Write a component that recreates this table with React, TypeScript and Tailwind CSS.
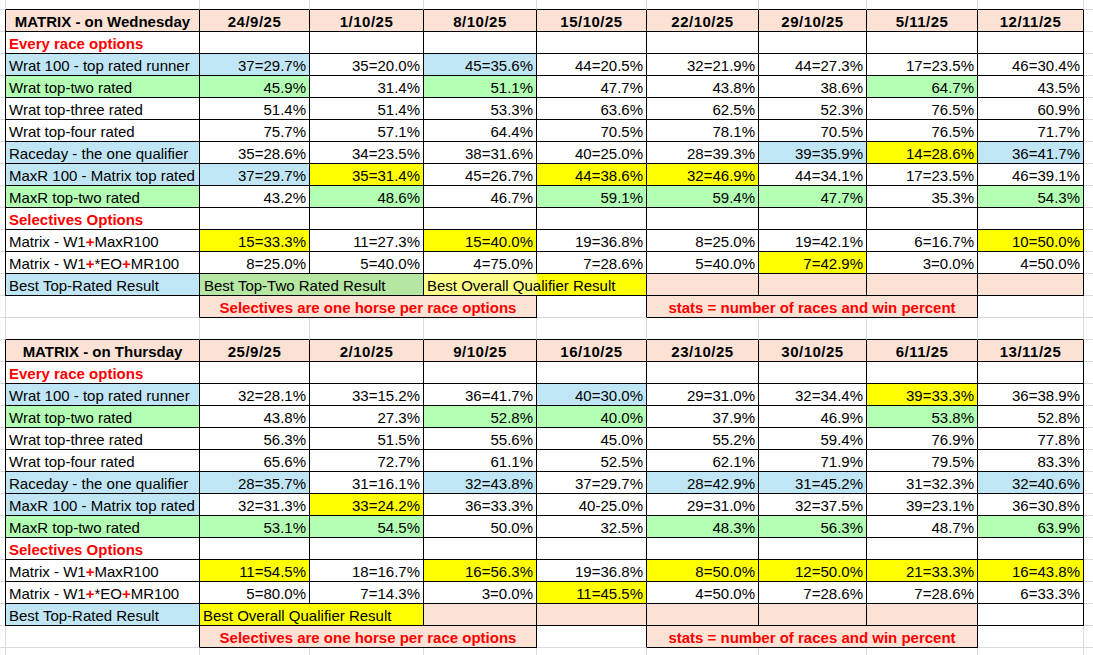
import type { ReactNode } from 'react'

type Bg = '' | 'b' | 'g' | 'y'

const BG: Record<Bg, string> = {
  '': 'bg-white',
  b: 'bg-[#c0e6f5]',
  g: 'bg-[#b3ffb3]',
  y: 'bg-[#ffff00]',
}

const GRID = 'grid grid-cols-[5px_195px_110px_114px_113px_110px_112px_108px_111px_106px_1fr]'
const ROW = `${GRID} h-[22px]`
const CELL = 'box-border border-r border-b overflow-hidden whitespace-nowrap leading-[23px] text-[15px]'
const BLK = 'border-r-black border-b-black'
const GREY = 'border-r-[#dadada] border-b-[#dadada]'
const GUT = 'box-border border-b border-b-[#dadada]'
const PEACH = 'bg-[#fbe2d5]'

type Row =
  | { section: string }
  | { label: ReactNode; lbg: Bg; cells: [string, Bg][] }

const Plus = () => <span className="font-bold text-[#ff0000]">+</span>

const W1MAX = (
  <>
    Matrix - W1<Plus />MaxR100
  </>
)
const W1EO = (
  <>
    Matrix - W1<Plus />*EO<Plus />MR100
  </>
)

const wednesday: Row[] = [
  { section: 'Every race options' },
  {
    label: 'Wrat 100 - top rated runner',
    lbg: 'b',
    cells: [['37=29.7%', 'b'], ['35=20.0%', ''], ['45=35.6%', 'b'], ['44=20.5%', ''], ['32=21.9%', ''], ['44=27.3%', ''], ['17=23.5%', ''], ['46=30.4%', '']],
  },
  {
    label: 'Wrat top-two rated',
    lbg: 'g',
    cells: [['45.9%', 'g'], ['31.4%', ''], ['51.1%', 'g'], ['47.7%', ''], ['43.8%', ''], ['38.6%', ''], ['64.7%', 'g'], ['43.5%', '']],
  },
  {
    label: 'Wrat top-three rated',
    lbg: '',
    cells: [['51.4%', ''], ['51.4%', ''], ['53.3%', ''], ['63.6%', ''], ['62.5%', ''], ['52.3%', ''], ['76.5%', ''], ['60.9%', '']],
  },
  {
    label: 'Wrat top-four rated',
    lbg: '',
    cells: [['75.7%', ''], ['57.1%', ''], ['64.4%', ''], ['70.5%', ''], ['78.1%', ''], ['70.5%', ''], ['76.5%', ''], ['71.7%', '']],
  },
  {
    label: 'Raceday - the one qualifier',
    lbg: 'b',
    cells: [['35=28.6%', ''], ['34=23.5%', ''], ['38=31.6%', ''], ['40=25.0%', ''], ['28=39.3%', ''], ['39=35.9%', 'b'], ['14=28.6%', 'y'], ['36=41.7%', 'b']],
  },
  {
    label: 'MaxR 100 - Matrix top rated',
    lbg: 'b',
    cells: [['37=29.7%', 'b'], ['35=31.4%', 'y'], ['45=26.7%', ''], ['44=38.6%', 'y'], ['32=46.9%', 'y'], ['44=34.1%', ''], ['17=23.5%', ''], ['46=39.1%', '']],
  },
  {
    label: 'MaxR top-two rated',
    lbg: 'g',
    cells: [['43.2%', ''], ['48.6%', 'g'], ['46.7%', ''], ['59.1%', 'g'], ['59.4%', 'g'], ['47.7%', 'g'], ['35.3%', ''], ['54.3%', 'g']],
  },
  { section: 'Selectives Options' },
  {
    label: W1MAX,
    lbg: '',
    cells: [['15=33.3%', 'y'], ['11=27.3%', ''], ['15=40.0%', 'y'], ['19=36.8%', ''], ['8=25.0%', ''], ['19=42.1%', ''], ['6=16.7%', ''], ['10=50.0%', 'y']],
  },
  {
    label: W1EO,
    lbg: '',
    cells: [['8=25.0%', ''], ['5=40.0%', ''], ['4=75.0%', ''], ['7=28.6%', ''], ['5=40.0%', ''], ['7=42.9%', 'y'], ['3=0.0%', ''], ['4=50.0%', '']],
  },
]

const thursday: Row[] = [
  { section: 'Every race options' },
  {
    label: 'Wrat 100 - top rated runner',
    lbg: 'b',
    cells: [['32=28.1%', ''], ['33=15.2%', ''], ['36=41.7%', ''], ['40=30.0%', 'b'], ['29=31.0%', ''], ['32=34.4%', ''], ['39=33.3%', 'y'], ['36=38.9%', '']],
  },
  {
    label: 'Wrat top-two rated',
    lbg: 'g',
    cells: [['43.8%', ''], ['27.3%', ''], ['52.8%', 'g'], ['40.0%', 'g'], ['37.9%', ''], ['46.9%', ''], ['53.8%', 'g'], ['52.8%', '']],
  },
  {
    label: 'Wrat top-three rated',
    lbg: '',
    cells: [['56.3%', ''], ['51.5%', ''], ['55.6%', ''], ['45.0%', ''], ['55.2%', ''], ['59.4%', ''], ['76.9%', ''], ['77.8%', '']],
  },
  {
    label: 'Wrat top-four rated',
    lbg: '',
    cells: [['65.6%', ''], ['72.7%', ''], ['61.1%', ''], ['52.5%', ''], ['62.1%', ''], ['71.9%', ''], ['79.5%', ''], ['83.3%', '']],
  },
  {
    label: 'Raceday - the one qualifier',
    lbg: 'b',
    cells: [['28=35.7%', 'b'], ['31=16.1%', ''], ['32=43.8%', 'b'], ['37=29.7%', ''], ['28=42.9%', 'b'], ['31=45.2%', 'b'], ['31=32.3%', ''], ['32=40.6%', 'b']],
  },
  {
    label: 'MaxR 100 - Matrix top rated',
    lbg: 'b',
    cells: [['32=31.3%', ''], ['33=24.2%', 'y'], ['36=33.3%', ''], ['40-25.0%', ''], ['29=31.0%', ''], ['32=37.5%', ''], ['39=23.1%', ''], ['36=30.8%', '']],
  },
  {
    label: 'MaxR top-two rated',
    lbg: 'g',
    cells: [['53.1%', 'g'], ['54.5%', 'g'], ['50.0%', ''], ['32.5%', ''], ['48.3%', 'g'], ['56.3%', 'g'], ['48.7%', ''], ['63.9%', 'g']],
  },
  { section: 'Selectives Options' },
  {
    label: W1MAX,
    lbg: '',
    cells: [['11=54.5%', 'y'], ['18=16.7%', ''], ['16=56.3%', 'y'], ['19=36.8%', ''], ['8=50.0%', 'y'], ['12=50.0%', 'y'], ['21=33.3%', 'y'], ['16=43.8%', 'y']],
  },
  {
    label: W1EO,
    lbg: '',
    cells: [['5=80.0%', ''], ['7=14.3%', ''], ['3=0.0%', ''], ['11=45.5%', 'y'], ['4=50.0%', ''], ['7=28.6%', ''], ['7=28.6%', ''], ['6=33.3%', '']],
  },
]

// empty row of plain gridlines; `edge` puts a black line under the table columns
function BlankRow({ tall = true, edge = false }: { tall?: boolean; edge?: boolean }) {
  return (
    <div className={`${GRID} ${tall ? 'h-[22px]' : 'h-[10px]'}`}>
      <div className={GUT} />
      {Array.from({ length: 9 }).map((_, i) => (
        <div
          key={i}
          className={`box-border border-r border-b border-r-[#dadada] ${edge ? 'border-b-black' : 'border-b-[#dadada]'} ${i === 0 ? 'border-l border-l-[#dadada]' : ''}`}
        />
      ))}
      <div className={GUT} />
    </div>
  )
}

function HeaderRow({ title, dates }: { title: string; dates: string[] }) {
  return (
    <div className={ROW}>
      <div className={GUT} />
      <div className={`${CELL} ${BLK} ${PEACH} border-l border-l-black text-center font-bold text-[14px]`}>{title}</div>
      {dates.map((d) => (
        <div key={d} className={`${CELL} ${BLK} ${PEACH} text-center font-bold tracking-[0.5px]`}>
          {d}
        </div>
      ))}
      <div className={GUT} />
    </div>
  )
}

function BodyRow({ row }: { row: Row }) {
  if ('section' in row) {
    return (
      <div className={ROW}>
        <div className={GUT} />
        <div className={`${CELL} ${BLK} border-l border-l-black pl-[3px] font-bold text-[14.5px] text-[#ff0000]`}>
          {row.section}
        </div>
        {Array.from({ length: 8 }).map((_, i) => (
          <div key={i} className={`${CELL} ${BLK} bg-white`} />
        ))}
        <div className={GUT} />
      </div>
    )
  }
  return (
    <div className={ROW}>
      <div className={GUT} />
      <div className={`${CELL} ${BLK} border-l border-l-black pl-[3px] ${BG[row.lbg]}`}>{row.label}</div>
      {row.cells.map(([v, bg], i) => (
        <div key={i} className={`${CELL} ${BLK} pr-[3px] text-right ${BG[bg]}`}>
          {v}
        </div>
      ))}
      <div className={GUT} />
    </div>
  )
}

function LegendWed() {
  return (
    <div className={ROW}>
      <div className={GUT} />
      <div className={`${CELL} ${BLK} border-l border-l-black pl-[3px] ${BG.b}`}>Best Top-Rated Result</div>
      <div className={`${CELL} ${BLK} col-span-2 pl-[4px] bg-[#b5e6a2]`}>Best Top-Two Rated Result</div>
      <div className={`${CELL} ${BLK} col-span-2 pl-[3px] bg-[linear-gradient(to_right,#ffff88_113px,#ffff00_113px)]`}>
        Best Overall Qualifier Result
      </div>
      {Array.from({ length: 4 }).map((_, i) => (
        <div key={i} className={`${CELL} ${BLK} ${PEACH}`} />
      ))}
      <div className={GUT} />
    </div>
  )
}

function LegendThu() {
  return (
    <div className={ROW}>
      <div className={GUT} />
      <div className={`${CELL} ${BLK} border-l border-l-black pl-[3px] ${BG.b}`}>Best Top-Rated Result</div>
      <div className={`${CELL} ${BLK} col-span-2 pl-[3px] bg-[#ffff00]`}>Best Overall Qualifier Result</div>
      {Array.from({ length: 5 }).map((_, i) => (
        <div key={i} className={`${CELL} ${BLK} ${PEACH}`} />
      ))}
      <div className={`${CELL} ${BLK} bg-white`} />
      <div className={GUT} />
    </div>
  )
}

function NotesRow() {
  const note = 'font-bold text-[14.5px] text-[#ff0000] text-center'
  return (
    <div className={ROW}>
      <div className={GUT} />
      <div className={`${CELL} border-l border-l-[#dadada] border-r-black border-b-[#dadada]`} />
      <div className={`${CELL} ${BLK} ${PEACH} col-span-3 ${note}`}>Selectives are one horse per race options</div>
      <div className={`${CELL} border-r-black border-b-[#dadada]`} />
      <div className={`${CELL} ${BLK} ${PEACH} col-span-3 ${note}`}>stats = number of races and win percent</div>
      <div className={`${CELL} ${GREY}`} />
      <div className={GUT} />
    </div>
  )
}

function Table({ title, dates, rows, legend }: { title: string; dates: string[]; rows: Row[]; legend: ReactNode }) {
  return (
    <>
      <HeaderRow title={title} dates={dates} />
      {rows.map((r, i) => (
        <BodyRow key={i} row={r} />
      ))}
      {legend}
      <NotesRow />
    </>
  )
}

export default function App() {
  return (
    <div className="w-[1093px] h-[655px] overflow-hidden bg-white text-black font-['Liberation_Sans',Arial,sans-serif]">
      <BlankRow tall={false} edge />
      <Table
        title="MATRIX - on Wednesday"
        dates={['24/9/25', '1/10/25', '8/10/25', '15/10/25', '22/10/25', '29/10/25', '5/11/25', '12/11/25']}
        rows={wednesday}
        legend={<LegendWed />}
      />
      <BlankRow edge />
      <Table
        title="MATRIX - on Thursday"
        dates={['25/9/25', '2/10/25', '9/10/25', '16/10/25', '23/10/25', '30/10/25', '6/11/25', '13/11/25']}
        rows={thursday}
        legend={<LegendThu />}
      />
      <BlankRow />
    </div>
  )
}
